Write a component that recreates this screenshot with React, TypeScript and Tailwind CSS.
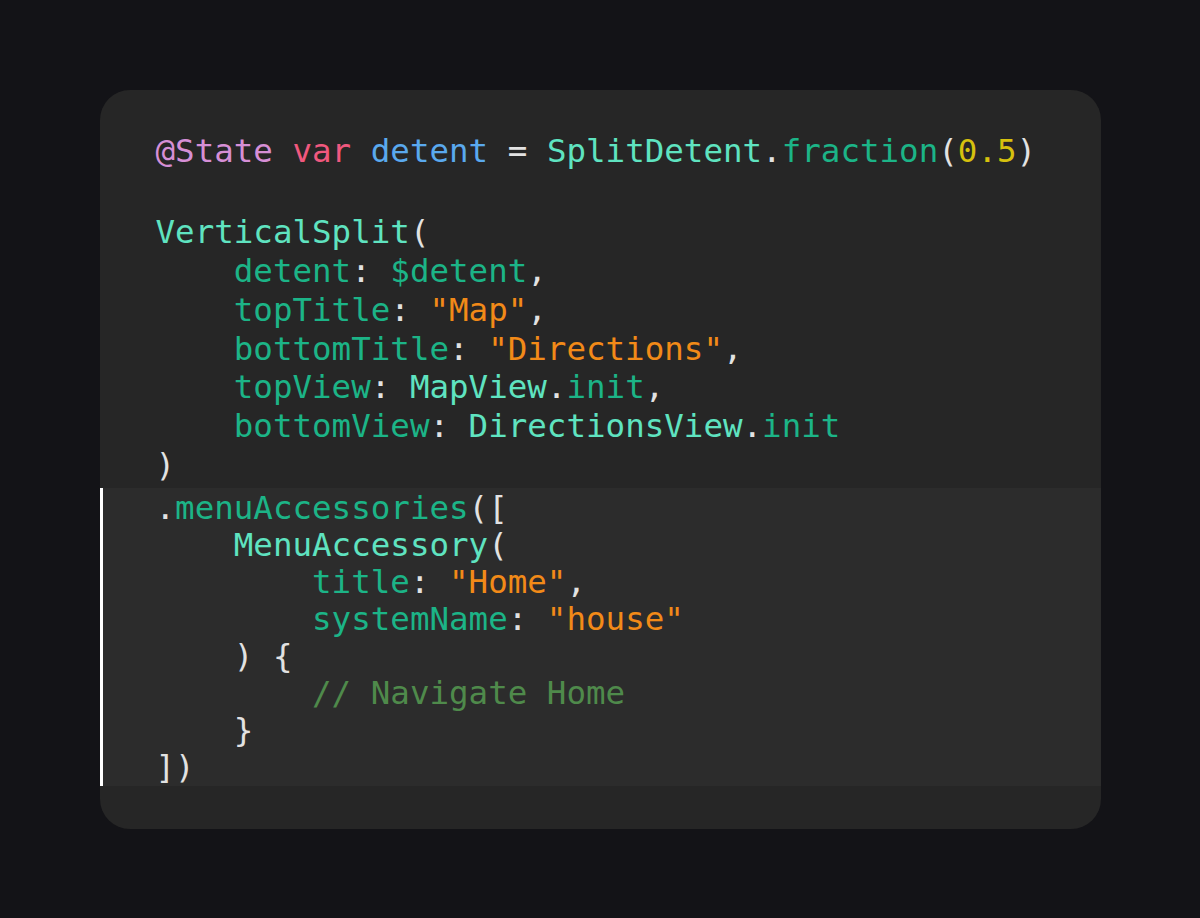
type Token = [string, string];

const C = {
  attr: "text-[#d68fd6]",
  kw: "text-[#f0587e]",
  decl: "text-[#5aa9ee]",
  type: "text-[#5fe3c0]",
  member: "text-[#1cb487]",
  num: "text-[#d6c10e]",
  str: "text-[#f28a18]",
  comment: "text-[#4f8a4b]",
  plain: "text-[#e2e2e2]",
};

const topLines: Token[][] = [
  [["@State", C.attr], [" ", C.plain], ["var", C.kw], [" ", C.plain], ["detent", C.decl], [" = ", C.plain], ["SplitDetent", C.type], [".", C.plain], ["fraction", C.member], ["(", C.plain], ["0.5", C.num], [")", C.plain]],
  [],
  [["VerticalSplit", C.type], ["(", C.plain]],
  [["    ", C.plain], ["detent", C.member], [": ", C.plain], ["$detent", C.member], [",", C.plain]],
  [["    ", C.plain], ["topTitle", C.member], [": ", C.plain], ['"Map"', C.str], [",", C.plain]],
  [["    ", C.plain], ["bottomTitle", C.member], [": ", C.plain], ['"Directions"', C.str], [",", C.plain]],
  [["    ", C.plain], ["topView", C.member], [": ", C.plain], ["MapView", C.type], [".", C.plain], ["init", C.member], [",", C.plain]],
  [["    ", C.plain], ["bottomView", C.member], [": ", C.plain], ["DirectionsView", C.type], [".", C.plain], ["init", C.member]],
  [[")", C.plain]],
];

const accessoryLines: Token[][] = [
  [[".", C.plain], ["menuAccessories", C.member], ["([", C.plain]],
  [["    ", C.plain], ["MenuAccessory", C.type], ["(", C.plain]],
  [["        ", C.plain], ["title", C.member], [": ", C.plain], ['"Home"', C.str], [",", C.plain]],
  [["        ", C.plain], ["systemName", C.member], [": ", C.plain], ['"house"', C.str]],
  [["    ) {", C.plain]],
  [["        ", C.plain], ["// Navigate Home", C.comment]],
  [["    }", C.plain]],
  [["])", C.plain]],
];

const CodeLine = ({ tokens }: { tokens: Token[] }) => {
  // blank line is a bit taller in the original
  if (tokens.length === 0) return <div className="h-[43px]" />;
  return (
    <div className="whitespace-pre">
      {tokens.map(([text, color], i) => (
        <span key={i} className={color}>{text}</span>
      ))}
    </div>
  );
};

export default function App() {
  return (
    <div className="min-h-screen w-full bg-[#131317] flex items-center justify-center">
      <div
        className="w-[1001px] h-[739px] bg-[#262626] rounded-[30px] overflow-hidden text-[32.5px]"
        style={{ fontFamily: '"DejaVu Sans Mono", "Liberation Mono", monospace' }}
      >
        <div className="pt-[42px] pl-[56px] leading-[38.8px] mb-[3px]">
          {topLines.map((line, i) => (
            <CodeLine key={i} tokens={line} />
          ))}
        </div>
        <div className="bg-[#2c2c2c] border-l-[3px] border-white pl-[53px] pt-[2px] leading-[37px]">
          {accessoryLines.map((line, i) => (
            <CodeLine key={i} tokens={line} />
          ))}
        </div>
      </div>
    </div>
  );
}
